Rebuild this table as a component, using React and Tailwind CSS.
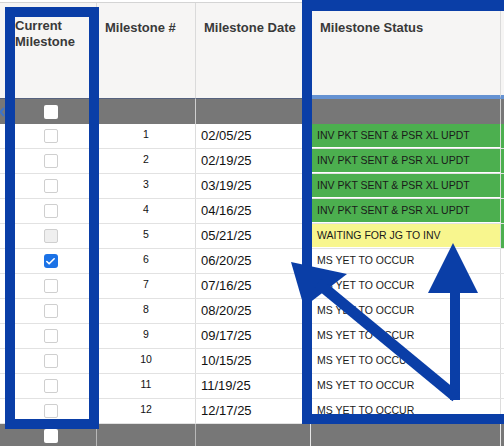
import { Check } from "lucide-react";

const GREEN = "bg-[#4caf4f]";
const YELLOW = "bg-[#f8f68e]";

const rows = [
  { n: 1, date: "02/05/25", status: "INV PKT SENT & PSR XL UPDT", tone: "green" },
  { n: 2, date: "02/19/25", status: "INV PKT SENT & PSR XL UPDT", tone: "green" },
  { n: 3, date: "03/19/25", status: "INV PKT SENT & PSR XL UPDT", tone: "green" },
  { n: 4, date: "04/16/25", status: "INV PKT SENT & PSR XL UPDT", tone: "green" },
  { n: 5, date: "05/21/25", status: "WAITING FOR JG TO INV", tone: "yellow", disabled: true },
  { n: 6, date: "06/20/25", status: "MS YET TO OCCUR", checked: true },
  { n: 7, date: "07/16/25", status: "MS YET TO OCCUR" },
  { n: 8, date: "08/20/25", status: "MS YET TO OCCUR" },
  { n: 9, date: "09/17/25", status: "MS YET TO OCCUR" },
  { n: 10, date: "10/15/25", status: "MS YET TO OCCUR" },
  { n: 11, date: "11/19/25", status: "MS YET TO OCCUR" },
  { n: 12, date: "12/17/25", status: "MS YET TO OCCUR" },
];

const Box = ({ checked, disabled }) => {
  if (checked) {
    return (
      <div className="w-[14px] h-[14px] rounded-[3px] bg-[#1b72e6] flex items-center justify-center">
        <Check size={11} strokeWidth={3.5} className="text-white" />
      </div>
    );
  }
  return (
    <div
      className={
        "w-[14px] h-[14px] rounded-[2px] border border-[#cfcfcf] " +
        (disabled ? "bg-[#efefef]" : "bg-white")
      }
    />
  );
};

const App = () => {
  return (
    <div className="relative w-[504px] h-[446px] overflow-hidden bg-white font-['Liberation_Sans',Arial,sans-serif]">
      <div className="pt-[2px]">
        {/* Header */}
        <div className="flex h-[97px] border-t border-[#d4d4d4] bg-[#f6f5f4] text-[13px] font-bold text-[#393939] leading-[16px]">
          <div className="w-[5px] border-b border-[#56627e]" />
          <div className="w-[92px] pl-[10px] pt-[15px] border-r border-b border-[#dadada] border-b-[#56627e]">
            Current Milestone
          </div>
          <div className="w-[99px] pl-[8px] pt-[17px] border-r border-b border-[#dadada] border-b-[#56627e]">
            Milestone #
          </div>
          <div className="w-[115px] pl-[8px] pt-[17px] border-r border-b border-[#dadada] border-b-[#56627e] whitespace-nowrap">
            Milestone Date
          </div>
          <div className="w-[190px] pl-[9px] pt-[17px] border-r border-[#dadada] border-b-4 border-b-[#6592d2]">
            Milestone Status
          </div>
          <div className="flex-1 border-b-4 border-[#6592d2]" />
        </div>

        {/* Filter row */}
        <div className="flex h-[25px] bg-[#777777]">
          <div className="w-[5px] flex items-center">
            <svg width="5" height="10" viewBox="0 0 5 10">
              <path d="M4 1 L0.5 5 L4 9" fill="none" stroke="#3f74c8" strokeWidth="2" />
            </svg>
          </div>
          <div className="w-[92px] flex items-center justify-center border-r border-[#8a8a8a]">
            <div className="w-[14px] h-[14px] bg-white rounded-[2px]" />
          </div>
          <div className="w-[99px] border-r border-[#cfcfcf]" />
          <div className="w-[115px] border-r border-[#cfcfcf]" />
          <div className="w-[190px] border-r border-[#cfcfcf]" />
          <div className="flex-1" />
        </div>

        {/* Data rows */}
        {rows.map((r) => {
          const tone = r.tone === "green" ? GREEN : r.tone === "yellow" ? YELLOW : "bg-white";
          const side = r.tone ? GREEN : "bg-white";
          return (
            <div key={r.n} className="flex h-[25px] border-b border-[#e2e2e2]">
              <div className="w-[5px]" />
              <div className="w-[92px] flex items-center justify-center border-r border-[#dcdcdc]">
                <Box checked={r.checked} disabled={r.disabled} />
              </div>
              <div className="w-[99px] flex items-center justify-center pb-[2px] border-r border-[#dcdcdc] text-[10.5px] text-[#111]">
                {r.n}
              </div>
              <div className="w-[115px] flex items-center pl-[5px] border-r border-[#dcdcdc] text-[13px] text-[#111]">
                {r.date}
              </div>
              <div
                className={
                  "w-[190px] flex items-center pl-[6px] border-r border-[#dcdcdc] text-[10.5px] text-[#1a1a1a] whitespace-nowrap " +
                  tone +
                  (r.tone ? " border-b border-b-white" : "")
                }
              >
                {r.status}
              </div>
              <div className={"flex-1 " + side} />
            </div>
          );
        })}

        {/* Footer row */}
        <div className="flex h-[30px] bg-[#777777]">
          <div className="w-[5px]" />
          <div className="w-[92px] flex justify-center pt-[5px] border-r border-[#b8b8b8]">
            <div className="w-[14px] h-[14px] bg-white rounded-[2px]" />
          </div>
          <div className="w-[99px] border-r border-[#b8b8b8]" />
          <div className="w-[115px] border-r border-[#e6e6e6]" />
          <div className="w-[190px] border-r border-[#e6e6e6]" />
          <div className="flex-1" />
        </div>
      </div>

      {/* Annotation: highlight boxes */}
      <div className="absolute left-[5px] top-[7px] w-[94px] h-[422px] border-[10px] border-[#0a3ea7]" />
      <div className="absolute left-[302px] top-0 w-[220px] h-[424px] border-[10px] border-t-[11px] border-[#0a3ea7]" />

      {/* Annotation: arrows */}
      <svg className="absolute inset-0" width="504" height="446" viewBox="0 0 504 446">
        <g fill="#0a3ea7" stroke="none">
          <rect x="450" y="288" width="10" height="112" />
          <polygon points="453,243 428,293 478,293" />
          <polygon points="291,262 347,274 304,307" />
        </g>
        <line x1="456" y1="397" x2="318" y2="283" stroke="#0a3ea7" strokeWidth="11" />
      </svg>
    </div>
  );
};

export default App;
